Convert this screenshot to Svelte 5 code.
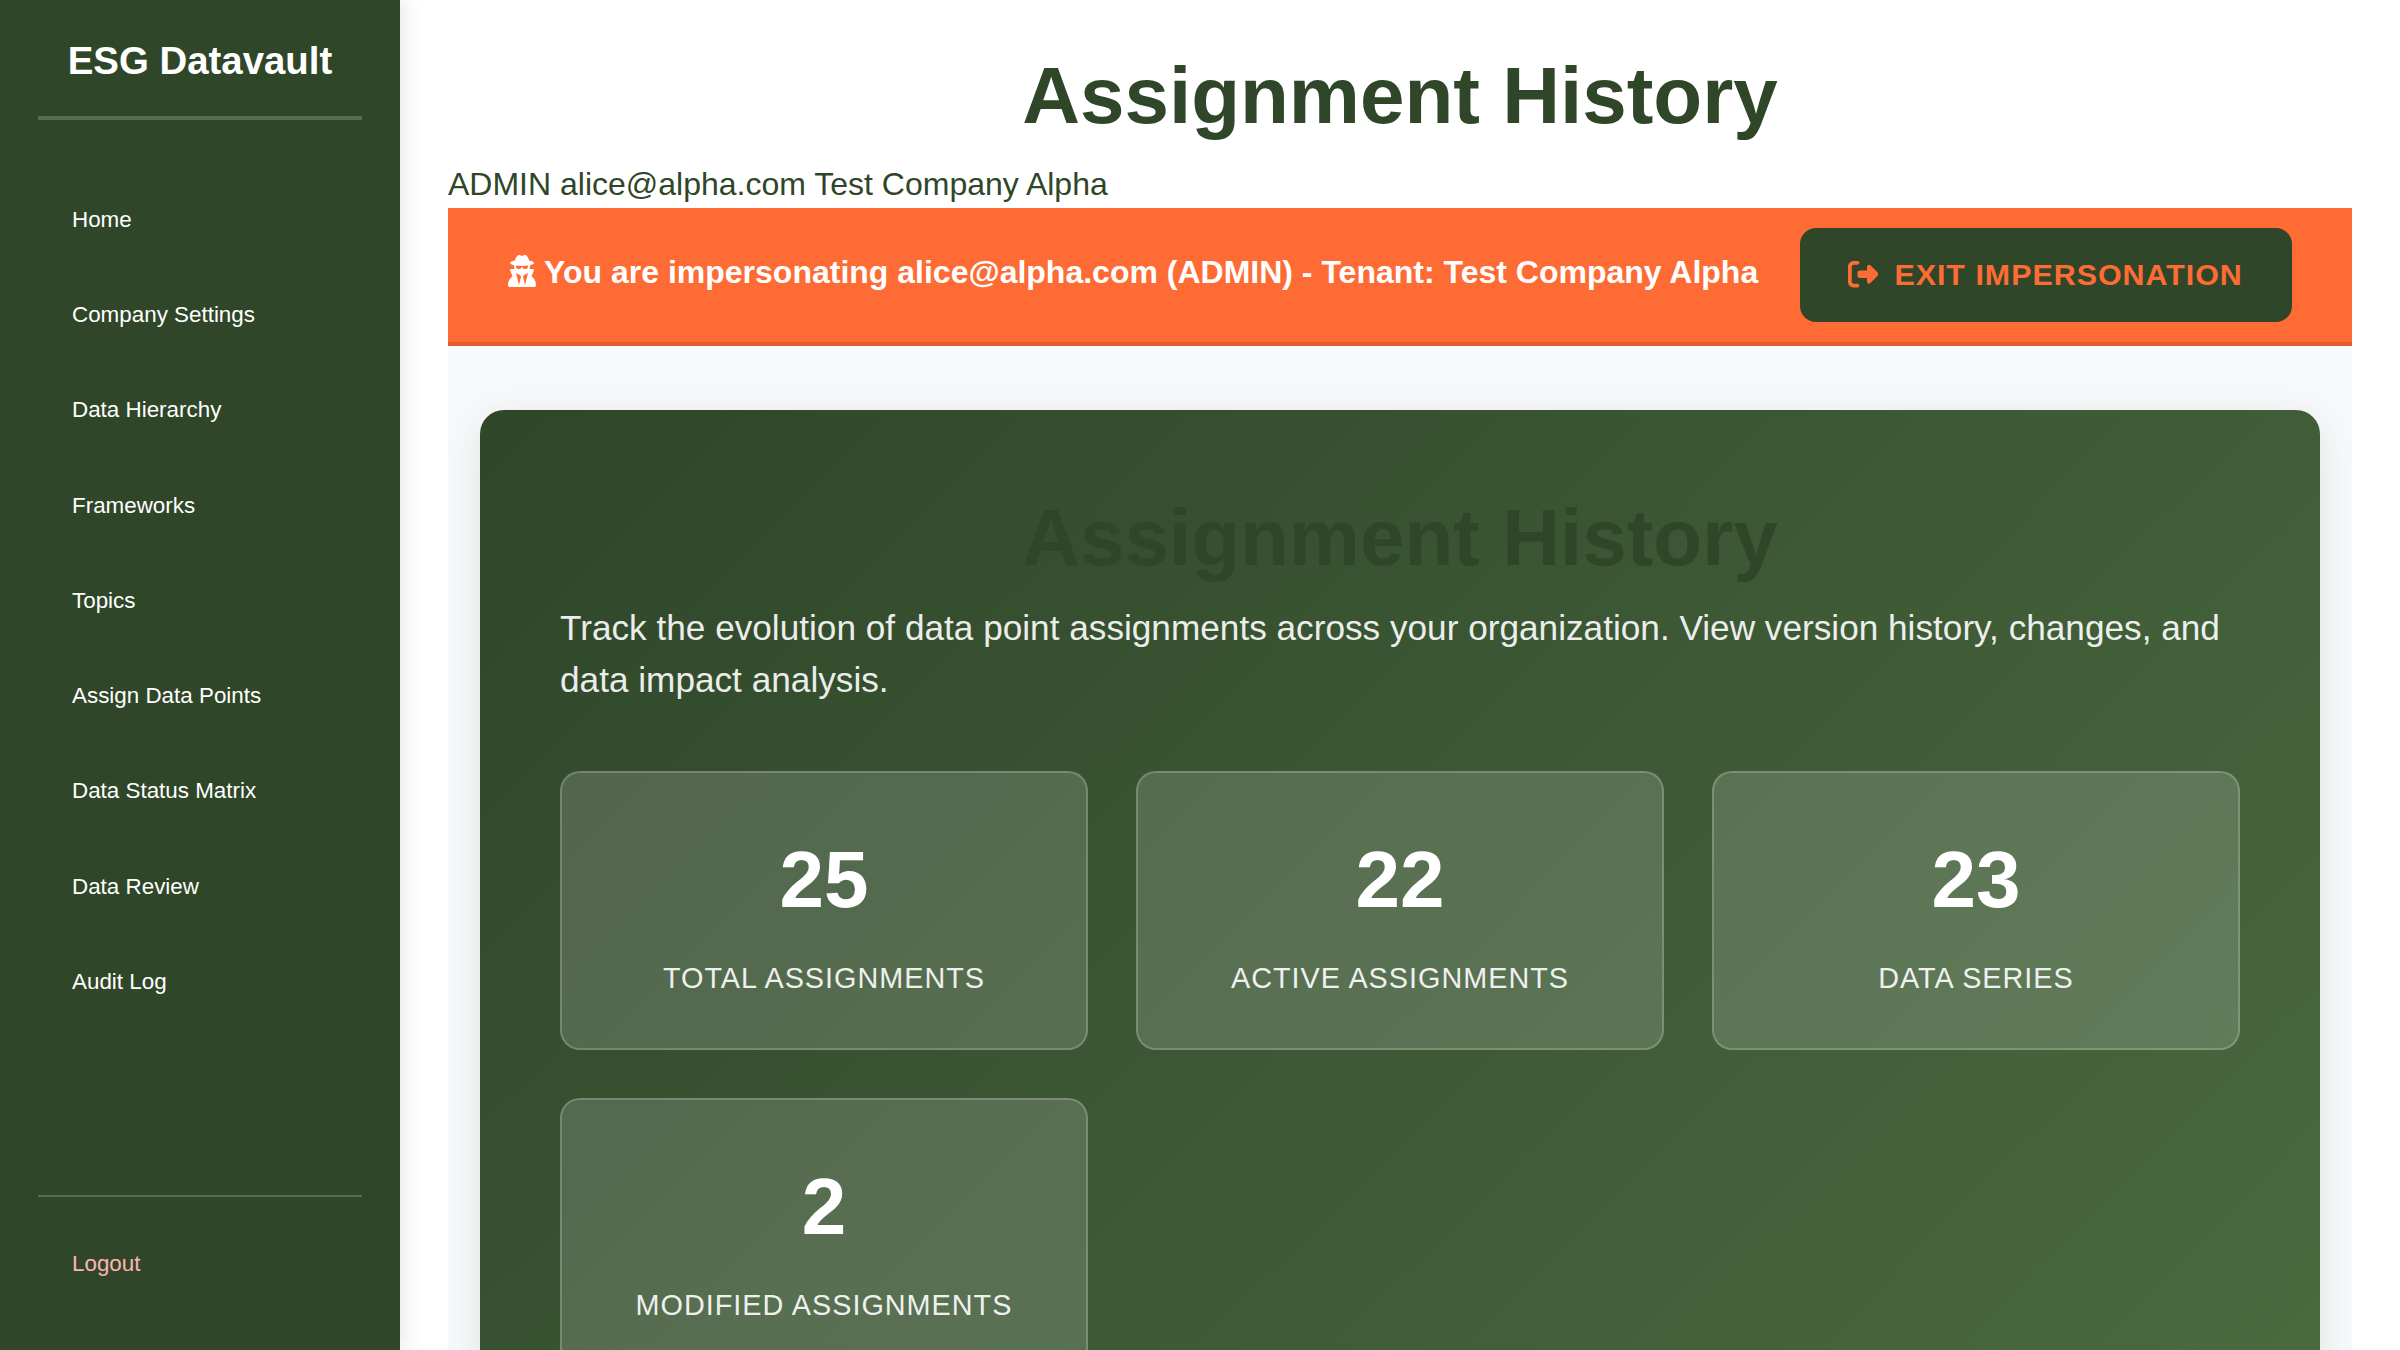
<script>
  const navItems = [
    'Home',
    'Company Settings',
    'Data Hierarchy',
    'Frameworks',
    'Topics',
    'Assign Data Points',
    'Data Status Matrix',
    'Data Review',
    'Audit Log'
  ];

  const stats = [
    { value: 25, label: 'Total Assignments' },
    { value: 22, label: 'Active Assignments' },
    { value: 23, label: 'Data Series' },
    { value: 2, label: 'Modified Assignments' }
  ];
</script>

<div class="app">
  <aside class="sidebar">
    <div class="brand">ESG Datavault</div>
    <nav class="nav">
      {#each navItems as item}
        <a class="nav-link" href="#top">{item}</a>
      {/each}
    </nav>
    <div class="sidebar-footer">
      <a class="nav-link logout" href="#top">Logout</a>
    </div>
  </aside>

  <main class="main">
    <h1 class="title">Assignment History</h1>
    <div class="user-info">ADMIN alice@alpha.com Test Company Alpha</div>

    <div class="banner">
      <div class="banner-text">
        <svg class="icon-secret" viewBox="0 0 448 512" aria-hidden="true">
          <path d="M224 16c-6.700 0-10.800-2.800-15.500-6.100C201.900 5.400 194 0 176 0c-30.500 0-52 43.700-66 89.400C62.700 98.100 32 112.200 32 128c0 14.300 25 27.100 64.600 35.900c-.4 4-.6 8-.6 12.100c0 17 3.300 33.200 9.300 48H45.400C38 224 32 230 32 237.400c0 1.700 .3 3.400 1 5l38.800 96.900C28.200 371.800 0 423.800 0 482.300C0 498.700 13.300 512 29.700 512H418.300c16.400 0 29.700-13.300 29.700-29.700c0-58.500-28.200-110.400-71.700-143L415 242.400c.6-1.600 1-3.300 1-5c0-7.400-6-13.400-13.400-13.400H342.700c6-14.800 9.300-31 9.300-48c0-4.100-.2-8.100-.6-12.100C391 155.100 416 142.300 416 128c0-15.800-30.700-29.900-78-38.600C324 43.700 302.500 0 272 0c-18 0-25.900 5.400-32.500 9.900c-4.700 3.300-8.800 6.100-15.500 6.100zm56 208H267.600c-16.500 0-31.100-10.600-36.300-26.200c-2.300-7-12.200-7-14.500 0c-5.200 15.600-19.900 26.200-36.300 26.200H168c-22.100 0-40-17.900-40-40V169.600c28.200 4.100 61 6.400 96 6.400s67.800-2.300 96-6.400V184c0 22.100-17.900 40-40 40zm-88 96l16 32L176 480 128 288l64 32zm128-32L272 480 240 352l16-32 64-32z" />
        </svg>
        <strong>You are impersonating alice@alpha.com (ADMIN) - Tenant: Test Company Alpha</strong>
      </div>
      <button class="exit">
        <svg class="icon-exit" viewBox="0 0 512 512" aria-hidden="true">
          <path d="M377.900 105.900L500.700 228.700c7.200 7.200 11.300 17.100 11.300 27.300s-4.100 20.100-11.300 27.300L377.900 406.100c-6.400 6.400-15 9.900-24 9.900c-18.700 0-33.900-15.200-33.900-33.900l0-62.100-128 0c-17.700 0-32-14.300-32-32l0-64c0-17.700 14.300-32 32-32l128 0 0-62.100c0-18.700 15.200-33.900 33.900-33.900c9 0 17.600 3.600 24 9.900zM160 96L96 96c-17.700 0-32 14.300-32 32l0 256c0 17.700 14.300 32 32 32l64 0c17.700 0 32 14.300 32 32s-14.300 32-32 32l-64 0c-53 0-96-43-96-96L0 128C0 75 43 32 96 32l64 0c17.700 0 32 14.300 32 32s-14.300 32-32 32z" />
        </svg>
        <span>Exit Impersonation</span>
      </button>
    </div>

    <div class="content">
      <section class="hero">
        <h1 class="title">Assignment History</h1>
        <p class="lead">
          Track the evolution of data point assignments across your organization. View version history, changes, and
          data impact analysis.
        </p>
        <div class="stats">
          {#each stats as stat}
            <div class="stat">
              <div class="stat-value">{stat.value}</div>
              <div class="stat-label">{stat.label}</div>
            </div>
          {/each}
        </div>
      </section>
    </div>
  </main>
</div>

<style>
  :global(body) {
    margin: 0;
    background: #fff;
    overflow: hidden;
  }

  .app {
    display: flex;
    height: 1350px;
    overflow: hidden;
    font-family: 'Liberation Sans', Arial, sans-serif;
    color: #2f4629;
  }

  .sidebar {
    box-sizing: border-box;
    width: 400px;
    height: 1350px;
    flex: none;
    display: flex;
    flex-direction: column;
    padding: 32px 38px 0;
    background: #2f4629;
    box-shadow: 4px 0 20px rgba(0, 0, 0, 0.1);
  }

  .brand {
    height: 84px;
    line-height: 58px;
    border-bottom: 4px solid rgba(255, 255, 255, 0.2);
    color: #fff;
    font-size: 38.4px;
    font-weight: 700;
    text-align: center;
  }

  .nav {
    flex: 1;
    display: flex;
    flex-direction: column;
    padding-top: 51.8px;
  }

  .nav-link {
    display: block;
    height: 95.25px;
    line-height: 95.25px;
    padding-left: 34px;
    color: #fff;
    font-size: 22.4px;
    text-decoration: none;
  }

  .sidebar-footer {
    height: 134px;
    padding-top: 19px;
    border-top: 2px solid rgba(255, 255, 255, 0.2);
  }

  .logout {
    color: #ffb3b3;
  }

  .main {
    flex: 1;
    min-width: 0;
    padding: 48px 48px 0;
  }

  .title {
    margin: 0;
    line-height: 96px;
    font-size: 80px;
    font-weight: 700;
    text-align: center;
    color: #2f4629;
  }

  .user-info {
    height: 48px;
    margin-top: 16px;
    line-height: 48px;
    font-size: 32px;
  }

  .banner {
    display: flex;
    justify-content: space-between;
    align-items: center;
    box-sizing: border-box;
    height: 138px;
    padding: 0 60px;
    border-bottom: 4px solid #e55a2b;
    background: #ff6b35;
    color: #fff;
  }

  .banner-text {
    display: flex;
    align-items: center;
    gap: 8px;
    height: 48px;
    margin-bottom: 6px;
    font-size: 32px;
    white-space: nowrap;
  }

  .icon-secret {
    width: 28px;
    height: 32px;
    margin-bottom: 2px;
    fill: currentColor;
  }

  .exit {
    display: flex;
    align-items: center;
    gap: 16px;
    box-sizing: border-box;
    width: 492px;
    height: 94px;
    padding: 0 48px 2px;
    border: 0;
    border-radius: 16px;
    background: #2f4629;
    color: #ff6b35;
    font-family: inherit;
    font-size: 30.4px;
    font-weight: 700;
    letter-spacing: 1px;
    text-transform: uppercase;
    white-space: nowrap;
  }

  .icon-exit {
    width: 30.4px;
    height: 30.4px;
    fill: currentColor;
  }

  .content {
    height: 1175px;
    padding: 64px 32px 0;
    background: #f8f9fb;
    overflow: hidden;
  }

  .hero {
    box-sizing: border-box;
    height: 1047px;
    padding: 80px;
    border-radius: 24px;
    background: linear-gradient(135deg, #2f4629 0%, #4a6b40 100%);
    box-shadow: 0 8px 40px rgba(47, 70, 41, 0.12);
  }

  .lead {
    margin: 16px 0 0;
    line-height: 52px;
    font-size: 35.2px;
    color: #fff;
    opacity: 0.9;
  }

  .stats {
    display: grid;
    grid-template-columns: repeat(3, 1fr);
    gap: 48px;
    margin-top: 65px;
  }

  .stat {
    box-sizing: border-box;
    height: 279px;
    padding-top: 61px;
    border: 2px solid rgba(255, 255, 255, 0.2);
    border-radius: 20px;
    background: rgba(255, 255, 255, 0.15);
    color: #fff;
    text-align: center;
  }

  .stat-value {
    line-height: 92px;
    font-size: 80px;
    font-weight: 700;
  }

  .stat-label {
    margin-top: 30px;
    line-height: 44px;
    font-size: 28.8px;
    letter-spacing: 1px;
    text-transform: uppercase;
    opacity: 0.9;
  }
</style>
